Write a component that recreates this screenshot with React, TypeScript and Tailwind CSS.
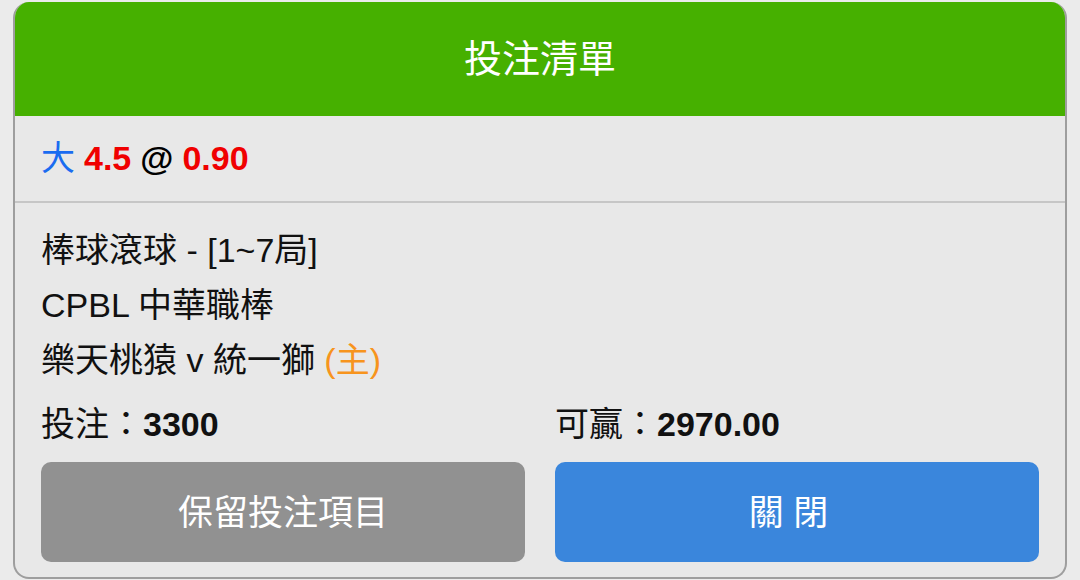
export default function App() {
  const font = { fontFamily: "'Liberation Sans', 'Noto Sans CJK TC', sans-serif" };
  return (
    <div className="w-[1080px] h-[580px] bg-[#ebebeb] overflow-hidden" style={font}>
      <div className="mx-[13px] mt-[2px] h-[577px] rounded-[16px] border-2 border-[#9e9e9e] border-t-0 bg-[#e8e8e8] overflow-hidden flex flex-col">
        <div className="h-[114px] bg-[#46b000] flex items-center justify-center text-white text-[38px] -mx-[2px]">
          投注清單
        </div>
        <div className="h-[87px] flex items-center px-[26px] text-[34px] font-bold border-b-2 border-[#c6c6c6]">
          <span className="text-[#1a6cf0] font-normal">大</span>
          <span className="text-[#f00000] ml-[9px]">4.5</span>
          <span className="text-black ml-[9px]">@</span>
          <span className="text-[#f00000] ml-[9px]">0.90</span>
        </div>
        <div className="px-[26px] pt-[20px] text-[34px] text-[#111] leading-[55px]">
          <div>棒球滾球 - [1~7局]</div>
          <div>CPBL 中華職棒</div>
          <div>
            樂天桃猿 v 統一獅 <span className="text-[#f7941d]">(主)</span>
          </div>
          <div className="grid grid-cols-2 gap-x-[30px] mt-[9px]">
            <div>
              投注：<span className="font-bold">3300</span>
            </div>
            <div>
              可贏：<span className="font-bold">2970.00</span>
            </div>
          </div>
          <div className="grid grid-cols-2 gap-x-[30px] mt-[10px]">
            <div className="h-[100px] rounded-[10px] bg-[#919191] text-white flex items-center justify-center text-[35px]">
              保留投注項目
            </div>
            <div className="h-[100px] rounded-[10px] bg-[#3a86dc] text-white flex items-center justify-center text-[35px] pr-[17px]">
              關 閉
            </div>
          </div>
        </div>
      </div>
    </div>
  );
}
